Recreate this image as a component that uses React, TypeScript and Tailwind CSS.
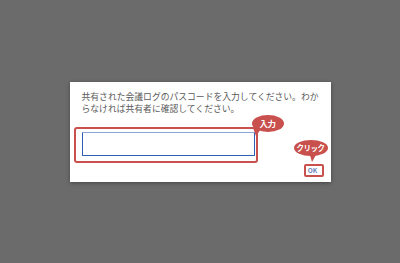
import React from "react";

function Bubble({ text, w, h, tailX, tailLen, fs, className }: { text: string; w: number; h: number; tailX: number; tailLen: number; fs: string; className: string }) {
  return (
    <div className={"absolute " + className} style={{ width: w, height: h + tailLen }}>
      <svg width={w} height={h + tailLen} className="absolute left-0 top-0">
        <ellipse cx={w / 2} cy={h / 2} rx={w / 2} ry={h / 2} fill="#c8504d" />
        <path d={`M${tailX - 3} ${h - 4} L${tailX} ${h + tailLen} L${tailX + 5} ${h - 3} Z`} fill="#c8504d" />
      </svg>
      <div
        className={"absolute left-0 top-0 flex items-center justify-center text-white font-bold leading-none whitespace-nowrap tracking-[-0.5px] " + fs}
        style={{ width: w, height: h }}
      >
        {text}
      </div>
    </div>
  );
}

export default function App() {
  return (
    <div
      className="w-[400px] h-[263px] bg-[#6b6b6b] flex items-center justify-center"
      style={{ fontFamily: '"Noto Sans CJK JP", "Noto Sans", sans-serif' }}
    >
      <div className="relative w-[261px] h-[100px] bg-white shadow-[0_1px_4px_rgba(0,0,0,0.35)] pl-3 pr-[7px] pt-[9px] flex flex-col">
        <p className="text-[8.8px] leading-[12px] text-[#5a5a5a]">
          共有された会議ログのパスコードを入力してください。わからなければ共有者に確認してください。
        </p>
        <div className="mt-[17px] w-[173px] h-[24px] border border-[#2f5fb3] border-t-[#8aa6d6] rounded-[1px]" />
        <div className="mt-[10px] flex justify-end pr-[3px]">
          <div className="w-[16px] h-[10px] flex items-center justify-center text-[6.5px] font-bold text-[#6a82b8] leading-none">OK</div>
        </div>

        <div className="absolute left-[4px] top-[45px] w-[184px] h-[36px] border-2 border-[#c8504d] rounded-[3px]" />
        <div className="absolute left-[234px] top-[82px] w-[20px] h-[13px] border-2 border-[#c8504d] rounded-[2px]" />
        <Bubble text="入力" w={32} h={17} tailX={4} tailLen={4} fs="text-[8.5px]" className="left-[182px] top-[33px]" />
        <Bubble text="クリック" w={34} h={16} tailX={18} tailLen={6} fs="text-[7.5px]" className="left-[224px] top-[58px]" />
      </div>
    </div>
  );
}
